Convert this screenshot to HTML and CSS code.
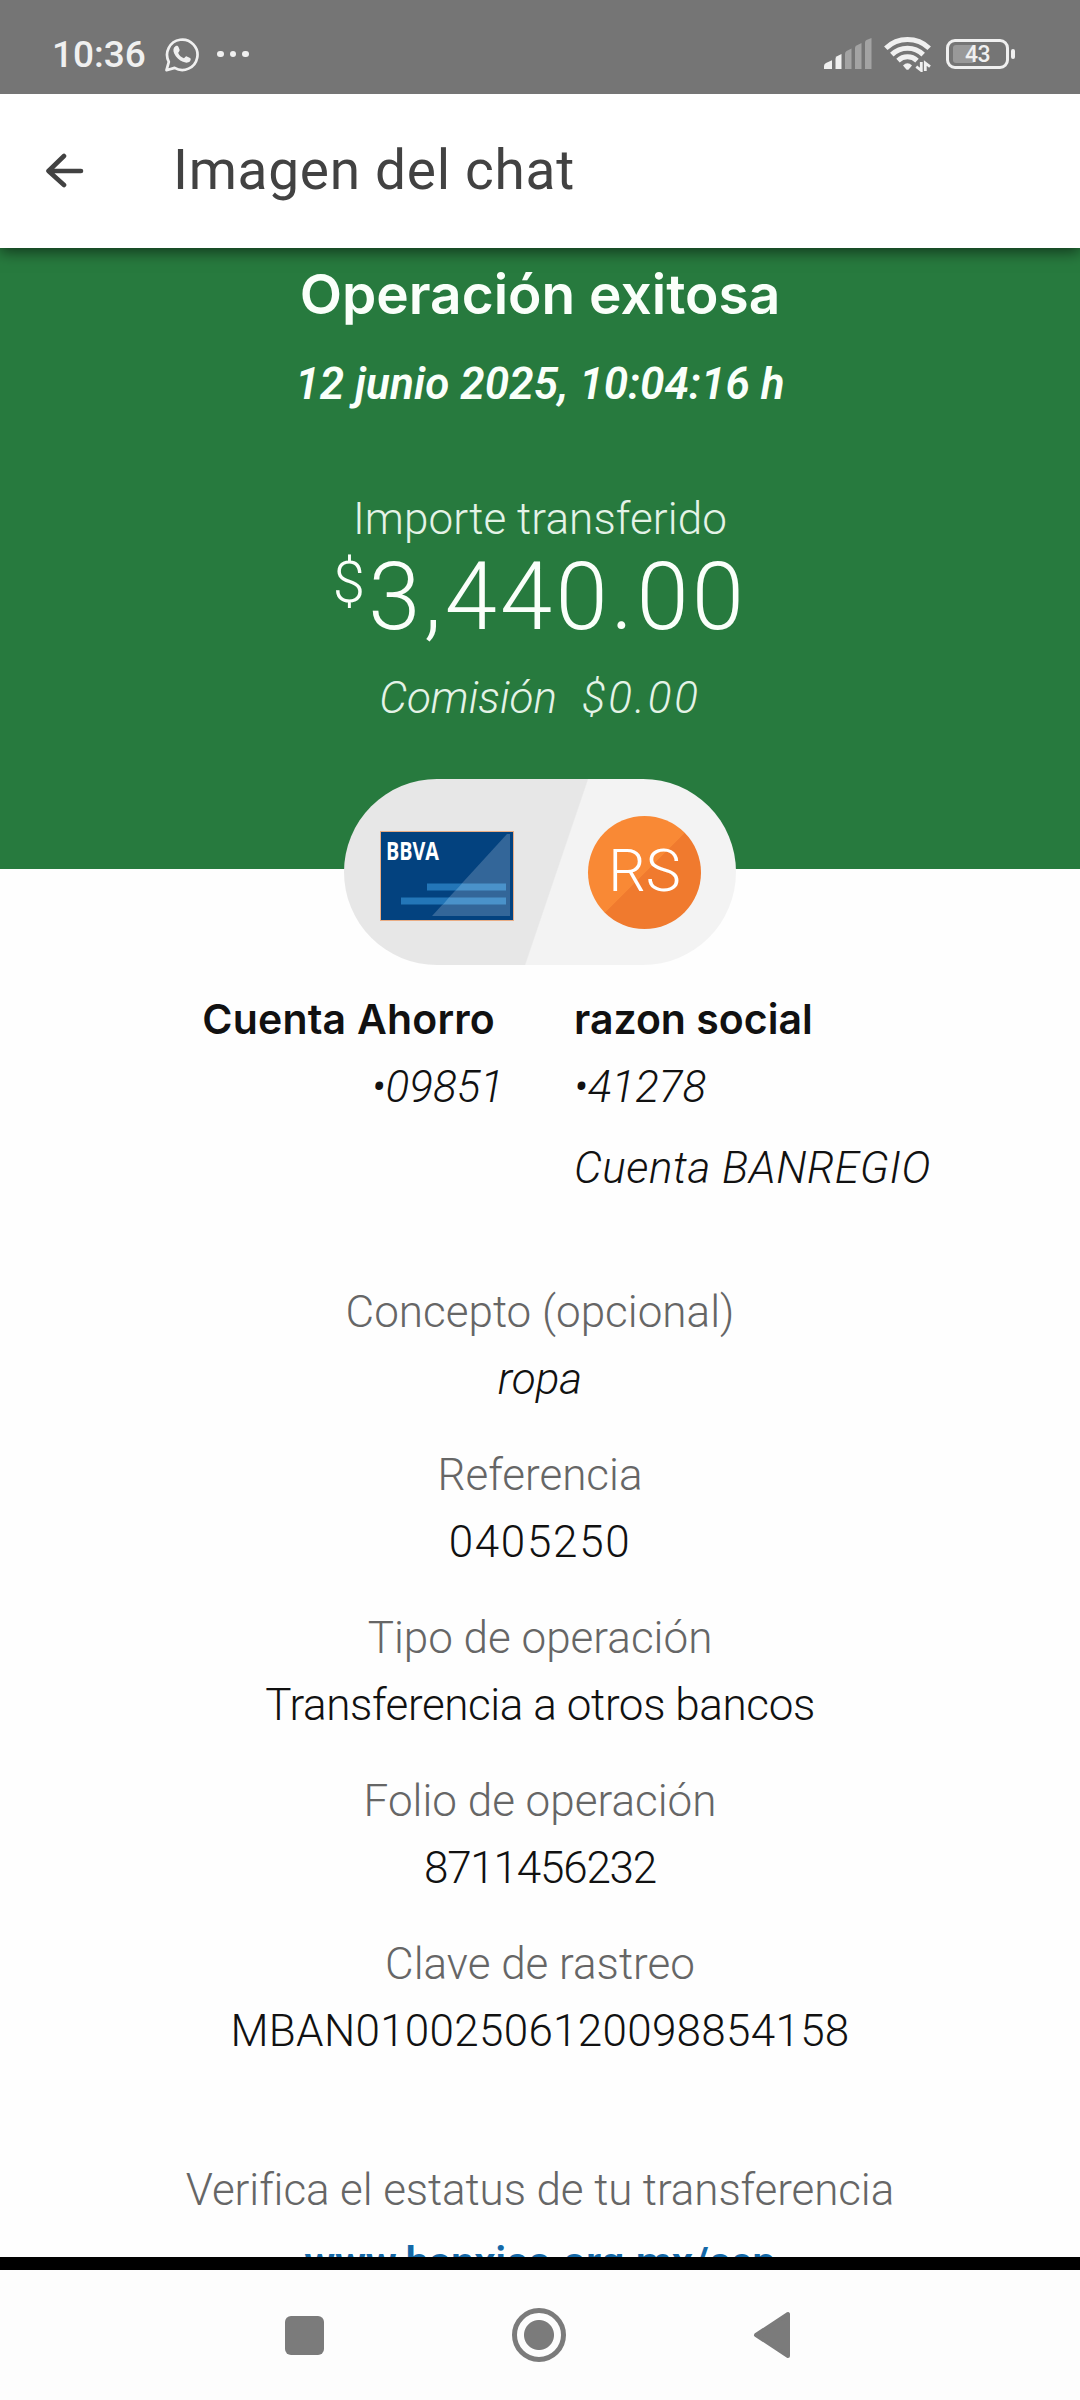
FILE: index.html
```
<!DOCTYPE html>
<html lang="es">
<head>
    <meta charset="UTF-8">
    <meta name="viewport" content="width=device-width, initial-scale=1.0">
    <title>Imagen del chat</title>
    <link rel="stylesheet" href="styles.css">
</head>
<body>
    <div class="screen">
        <div class="status-bar">
            <span class="clock">10:36</span>
            <svg class="whatsapp" width="34" height="35" viewBox="0 0 34 35">
                <path d="M1.5 33.2 L3.8 24.8 A15.2 15.2 0 1 1 9.6 30.9 Z" fill="none" stroke="#f0f0f0" stroke-width="2.7" stroke-linejoin="round"/>
                <path d="M10.4 9.2 C11.6 8.4 13 8.8 13.5 10 L14.6 12.8 C15 14 13.4 15 13.2 15.9 C14.2 18.2 16.2 20.2 18.9 21.2 C19.9 21 20.6 19 21.9 19.4 L25 21 C26 21.6 25.9 23.2 25 24.2 C23.2 26 20.6 26 18 24.8 C14.2 23.2 11 20.2 9.2 16.4 C7.8 13.4 8.2 10.6 10.4 9.2 Z" fill="#f0f0f0"/>
            </svg>
            <span class="dots"><i></i><i></i><i></i></span>

            <svg class="signal" width="48" height="32" viewBox="0 0 48 32">
                <path d="M0 31 V28 Q0 26 2 25 L8 22.2 V31 Z" fill="#f0f0f0"/>
                <path d="M11.5 31 V21 Q11.5 19 13 18.2 L17.5 16 V31 Z" fill="#f0f0f0"/>
                <path d="M21 31 V16 Q21 14 22.5 13 L27.5 10.5 V31 Z" fill="#a3a3a3"/>
                <path d="M31 31 V10 Q31 8.3 32.5 7.4 L37.5 5 V31 Z" fill="#a3a3a3"/>
                <path d="M41 31 V4.5 Q41 2.8 42.5 2 L47.5 0 V31 Z" fill="#a3a3a3"/>
            </svg>
            <svg class="wifi" width="48" height="36" viewBox="0 0 48 36">
                <g fill="none" stroke="#f0f0f0" stroke-width="5">
                    <path d="M1.8 12.2 A31.5 31.5 0 0 1 45.2 12.2"/>
                    <path d="M7.8 18.6 A22.5 22.5 0 0 1 39.2 18.6"/>
                    <path d="M14 24.6 A13.8 13.8 0 0 1 33 24.6"/>
                </g>
                <path d="M19 29.5 Q23.5 25.2 28 29.5 L24.6 33.4 Q23.5 34.3 22.4 33.4 Z" fill="#f0f0f0"/>
                <path d="M37.3 26 V34.5 L32.3 30.7 M41.3 35 V27 L46 30.6" fill="none" stroke="#f0f0f0" stroke-width="2.8"/>
            </svg>
            <span class="battery"><span class="battery-level"></span><span class="battery-text">43</span></span>
            <span class="battery-tip"></span>
        </div>

        <header class="app-bar">
            <svg class="back" width="40" height="36" viewBox="0 0 40 36">
                <path d="M36 18 H4 M19 3 L3.5 18 L19 32" fill="none" stroke="#424242" stroke-width="4.6" stroke-linecap="round" stroke-linejoin="round"/>
            </svg>
            <h1>Imagen del chat</h1>
        </header>

        <main class="receipt">
            <section class="hero">
                <h2>Operación exitosa</h2>
                <p class="date">12 junio 2025, 10:04:16 h</p>
                <p class="amount-label">Importe transferido</p>
                <p class="amount"><span class="currency">$</span>3,440.00</p>
                <p class="fee"><span>Comisión</span><span class="fee-value">$0.00</span></p>
            </section>

            <div class="pill">
                <svg class="card" width="134" height="90" viewBox="0 0 134 90">
                    <rect x=".5" y=".5" width="133" height="89" fill="#03427f" stroke="#e9ad85"/>
                    <path d="M52 85 L127 3 H130 V85 Z" fill="#336699"/>
                    <path d="M47 52.5 H83 L76 59.5 H47 Z M21 66.5 H70 L64 73.5 H21 Z" fill="#2376b8"/>
                    <path d="M82 52.5 H126 V59.5 H75.5 Z M69 66.5 H126 V73.5 H63 Z" fill="#4a92ca"/>
                    <text x="6" y="29" class="card-brand" textLength="53" lengthAdjust="spacingAndGlyphs">BBVA</text>
                </svg>
                <div class="avatar">RS</div>
            </div>

            <section class="accounts">
                <div class="origin">
                    <h3>Cuenta Ahorro</h3>
                    <p class="number">•09851</p>
                </div>
                <div class="target">
                    <h3>razon social</h3>
                    <p class="number">•41278</p>
                    <p class="bank">Cuenta BANREGIO</p>
                </div>
            </section>

            <dl class="details">
                <dt>Concepto (opcional)</dt>
                <dd class="concept">ropa</dd>
                <dt>Referencia</dt>
                <dd class="reference">0405250</dd>
                <dt>Tipo de operación</dt>
                <dd class="kind">Transferencia a otros bancos</dd>
                <dt>Folio de operación</dt>
                <dd class="folio">8711456232</dd>
                <dt>Clave de rastreo</dt>
                <dd class="tracking">MBAN01002506120098854158</dd>
            </dl>

            <p class="verify">Verifica el estatus de tu transferencia</p>
            <p class="link">www.banxico.org.mx/cep</p>
        </main>

        <nav class="nav-bar">
            <span class="recents"></span>
            <span class="home"></span>
            <svg class="nav-back" width="38" height="48" viewBox="0 0 38 48">
                <path d="M35 3 V45 L3 24 Z" fill="#7b7b7b" stroke="#7b7b7b" stroke-width="4" stroke-linejoin="round"/>
            </svg>
        </nav>
    </div>
</body>
</html>
```
FILE: styles.css
```
* {
    box-sizing: border-box;
    margin: 0;
    padding: 0;
}

body {
    background-color: #fff;
    font-family: "Roboto", sans-serif;
}

.screen {
    width: 1080px;
    height: 2400px;
    display: flex;
    flex-direction: column;
    overflow: hidden;
}

/* status bar */
.status-bar {
    height: 94px;
    flex: none;
    display: flex;
    align-items: center;
    padding: 14px 65px 0 52px;
    background-color: #757575;
    color: #f0f0f0;
    position: relative;
    z-index: 2;
}

.clock {
    font-size: 37px;
    font-weight: 500;
    line-height: 44px;
    width: 113px;
    margin-top: 2px;
}

.whatsapp {
    flex: none;
}

.dots {
    display: flex;
    gap: 6px;
    margin-left: 18px;
    margin-right: auto;
}

.dots i {
    width: 6.5px;
    height: 6.5px;
    border-radius: 50%;
    background-color: #f0f0f0;
}

.wifi {
    margin-left: 12px;
    margin-right: 14px;
}

.battery {
    width: 63px;
    height: 30px;
    border: 3px solid #f0f0f0;
    border-radius: 9px;
    position: relative;
    text-align: center;
}

.battery-level {
    position: absolute;
    left: 4px;
    top: 3px;
    width: 22px;
    height: 18px;
    border-radius: 3px;
    background-color: #999;
}

.battery-text {
    position: relative;
    display: block;
    font-size: 23px;
    font-weight: 500;
    line-height: 26px;
    letter-spacing: -.5px;
}

.battery-tip {
    width: 4px;
    height: 10px;
    margin-left: 2px;
    border-radius: 2px;
    background-color: #f0f0f0;
}

/* app bar */
.app-bar {
    height: 154px;
    flex: none;
    display: flex;
    align-items: center;
    padding-left: 45px;
    background-color: #fff;
    box-shadow: 0 4px 14px rgba(0, 0, 0, .55);
    position: relative;
    z-index: 1;
}

.app-bar h1 {
    margin-left: 88px;
    margin-top: -2px;
    font-size: 55px;
    font-weight: 400;
    letter-spacing: .7px;
    color: #424242;
}

/* receipt */
.receipt {
    height: 2009px;
    flex: none;
    overflow: hidden;
    text-align: center;
    white-space: nowrap;
    background-color: #fefefe;
}

.hero {
    height: 621px;
    padding-top: 16px;
    background-color: #277a3e;
    color: #fafffa;
}

.hero h2 {
    font: 600 55px/60px "Inter", sans-serif;
}

.date {
    margin-top: 30px;
    font-size: 44px;
    font-style: italic;
    font-weight: 600;
    line-height: 60px;
    letter-spacing: .1px;
}

.amount-label {
    margin-top: 75px;
    font-size: 44px;
    font-weight: 300;
    line-height: 60px;
    letter-spacing: .1px;
    color: #e4f3e7;
}

.amount {
    font-size: 94px;
    font-weight: 300;
    line-height: 96px;
    letter-spacing: 3.2px;
}

.currency {
    font-size: 58px;
    line-height: 0;
    vertical-align: 27px;
}

.fee {
    margin-top: 23px;
    font-size: 44px;
    font-style: italic;
    font-weight: 300;
    line-height: 60px;
    color: #e4f3e7;
}

.fee-value {
    margin-left: 25px;
    letter-spacing: 2.8px;
}

.pill {
    width: 392px;
    height: 186px;
    margin: -90px auto 0;
    padding: 0 35px 0 36px;
    display: flex;
    align-items: center;
    justify-content: space-between;
    border-radius: 93px;
    background: linear-gradient(108.7deg, #e7e7e7 0 53.5%, #f3f3f3 53.8%);
    position: relative;
}

.card {
    margin-top: 7px;
}

.card-brand {
    font: 700 25px "Open Sans", sans-serif;
    fill: #fff;
}

.avatar {
    width: 113px;
    height: 113px;
    border-radius: 50%;
    background: linear-gradient(135deg, #f98935 50%, #f07a2e 50.5%);
    color: #fff;
    font-size: 59px;
    font-weight: 300;
    line-height: 110px;
}

.accounts {
    display: grid;
    grid-template-columns: 504px 1fr;
    column-gap: 70px;
    margin-top: 24px;
    color: #111;
}

.origin {
    text-align: right;
}

.origin h3 {
    padding-right: 9px;
    letter-spacing: .2px;
}

.target {
    text-align: left;
}

.accounts h3 {
    font: 600 41px/60px "Inter", sans-serif;
}

.number,
.bank {
    font-size: 44px;
    font-style: italic;
    font-weight: 300;
    line-height: 60px;
}

.number {
    margin-top: 8px;
}

.bank {
    margin-top: 21px;
    letter-spacing: .6px;
}

.details {
    margin-top: 80px;
    font-size: 44px;
    font-weight: 300;
}

.details dt {
    line-height: 68px;
    color: #666;
}

.details dd {
    line-height: 67px;
    margin-bottom: 28px;
    color: #111;
}

.details .concept {
    font-style: italic;
}

.details .reference {
    letter-spacing: 1.7px;
}

.details .kind {
    letter-spacing: -.4px;
}

.details .folio {
    letter-spacing: -1.2px;
}

.details .tracking {
    letter-spacing: .3px;
}

.verify {
    margin-top: 91px;
    font-size: 44px;
    font-weight: 300;
    line-height: 68px;
    letter-spacing: -.1px;
    color: #666;
}

/* runs under the bottom edge of the viewer */
.link {
    margin-top: 9px;
    font-size: 42px;
    font-weight: 600;
    line-height: 60px;
    letter-spacing: -.3px;
    color: #1469a8;
}

/* navigation bar */
.nav-bar {
    height: 143px;
    flex: none;
    display: flex;
    align-items: center;
    padding-left: 285px;
    border-top: 13px solid #000;
    background-color: #fdfdfd;
}

.recents {
    width: 39px;
    height: 39px;
    border-radius: 6px;
    background-color: #7b7b7b;
}

.home {
    width: 54px;
    height: 54px;
    margin-left: 188px;
    border: 5px solid #7b7b7b;
    border-radius: 50%;
    background: radial-gradient(circle, #7b7b7b 14.5px, #fdfdfd 15.5px);
}

.nav-back {
    margin-left: 187px;
}
```
